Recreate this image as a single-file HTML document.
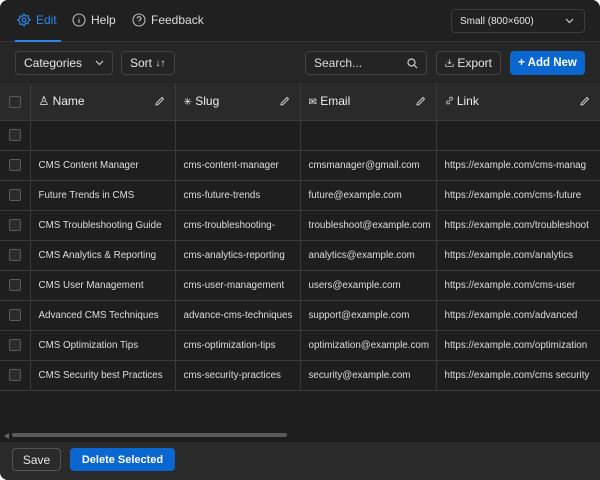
<!DOCTYPE html>
<html><head><style>
*{box-sizing:border-box;margin:0;padding:0}
html,body{width:600px;height:480px;background:#fff;overflow:hidden;font-family:"Liberation Sans",sans-serif}
#app{position:absolute;left:0;top:0;width:600px;height:480px;background:#1e1e1e;border-radius:8px 8px 0 8px;overflow:hidden;color:#e6e6e6}
.top{position:absolute;top:0;left:0;right:0;height:42px;background:#202020;border-bottom:1px solid #353535}
.tab{position:absolute;top:13px;font-size:12px;display:flex;align-items:center;gap:5px;color:#ddd}
.tb{position:absolute;top:42px;left:0;right:0;height:41px;background:#262626}
.btn{position:absolute;height:24px;border:1px solid #444;border-radius:4px;font-size:12px;display:flex;align-items:center;padding:0 8px;color:#e6e6e6;background:#242424;white-space:nowrap}
.blue{background:#0b67d0;border-color:#0b67d0;color:#fff}
table{position:absolute;top:83px;left:0;border-collapse:collapse;font-size:9.8px;table-layout:fixed;width:620px}
td,th{border:1px solid #3a3a3a;height:30px;padding:0 8px;white-space:nowrap;overflow:hidden;text-align:left;font-weight:normal;color:#ddd}
th{height:37px;background:#2a2a2a;font-size:12px;color:#eee;position:relative}
tr:first-child th{border-top:none}
td:first-child,th:first-child{border-left:none;padding:0;text-align:center}
.cb{display:inline-block;width:12px;height:12px;border:1px solid #5a5a5a;border-radius:2px;background:#2b2b2b;vertical-align:middle}
.pen{position:absolute;right:10px;top:13px}
.foot{position:absolute;left:0;right:0;top:442px;bottom:0;background:#2a2a2a}
</style></head><body><div id="app">
<div class="top">
 <div class="tab" style="left:17px;color:#2f86e8"><svg width="14" height="14" viewBox="0 0 14 14" fill="none" stroke="#2f86e8" stroke-width="1.2"><path d="M7 1l1.5 2 2.5-.3.3 2.5 2 1.5-2 1.5-.3 2.5-2.5-.3L7 13l-1.5-2-2.5.3-.3-2.5L.7 7l2-1.5.3-2.5 2.5.3z"/><circle cx="7" cy="7" r="2"/></svg>Edit</div>
 <div style="position:absolute;left:15px;top:40px;width:46px;height:2px;background:#2f86e8"></div>
 <div class="tab" style="left:72px"><svg width="14" height="14" viewBox="0 0 14 14" fill="none" stroke="#bbb" stroke-width="1.1"><circle cx="7" cy="7" r="6"/><path d="M7 6v4M7 4v.5"/></svg>Help</div>
 <div class="tab" style="left:132px"><svg width="14" height="14" viewBox="0 0 14 14" fill="none" stroke="#bbb" stroke-width="1.1"><circle cx="7" cy="7" r="6"/><path d="M5.3 5.5a1.8 1.8 0 1 1 2.2 1.7c-.4.2-.5.5-.5 1v.3M7 10v.4"/></svg>Feedback</div>
 <div class="btn" style="left:451px;top:9px;width:134px;height:24px;font-size:10px;background:#202020;border-color:#3c3c3c">Small (800×600)<svg style="position:absolute;right:10px" width="9" height="6" viewBox="0 0 9 6" fill="none" stroke="#ccc" stroke-width="1.2"><path d="M1 1l3.5 3.5L8 1"/></svg></div>
</div>
<div class="tb">
 <div class="btn" style="left:15px;top:9px;width:98px">Categories<svg style="position:absolute;right:8px" width="9" height="6" viewBox="0 0 9 6" fill="none" stroke="#ccc" stroke-width="1.2"><path d="M1 1l3.5 3.5L8 1"/></svg></div>
 <div class="btn" style="left:121px;top:9px;width:54px">Sort&nbsp;<span style="font-size:10px">↓↑</span></div>
 <div class="btn" style="left:305px;top:9px;width:122px;color:#ddd">Search...<svg style="position:absolute;right:8px" width="11" height="11" viewBox="0 0 11 11" fill="none" stroke="#ccc" stroke-width="1.2"><circle cx="4.5" cy="4.5" r="3.5"/><path d="M7 7l3 3"/></svg></div>
 <div class="btn" style="left:436px;top:9px;width:65px"><svg width="12" height="12" viewBox="0 0 12 12" fill="none" stroke="#ccc" stroke-width="1.1"><path d="M6 1v6M3.5 4.5L6 7l2.5-2.5M1 7v3.5h10V7"/></svg>&nbsp;Export</div>
 <div class="btn blue" style="left:510px;top:9px;width:75px;font-weight:bold;font-size:11.5px;justify-content:center;padding:0">+ Add New</div>
</div>
<table>
<colgroup><col style="width:30px"><col style="width:145px"><col style="width:125px"><col style="width:136px"><col style="width:184px"></colgroup>
<tr><th><span class="cb"></span></th><th>♙ Name<svg class="pen" width="10" height="10" viewBox="0 0 10 10" fill="none" stroke="#ccc"><path d="M1 9l.5-2L7 1.5 8.5 3 3 8.5z"/></svg></th><th><span style="font-size:10px">✳</span> Slug<svg class="pen" width="10" height="10" viewBox="0 0 10 10" fill="none" stroke="#ccc"><path d="M1 9l.5-2L7 1.5 8.5 3 3 8.5z"/></svg></th><th><span style="font-size:10px">✉</span> Email<svg class="pen" width="10" height="10" viewBox="0 0 10 10" fill="none" stroke="#ccc"><path d="M1 9l.5-2L7 1.5 8.5 3 3 8.5z"/></svg></th><th><svg width="9" height="9" viewBox="0 0 9 9" fill="none" stroke="#bbb"><path d="M3.5 5.5l2-2M4 2.5l1-1a1.4 1.4 0 0 1 2 2l-1 1M5 6.5l-1 1a1.4 1.4 0 0 1-2-2l1-1"/></svg> Link<svg class="pen" style="right:30px" width="10" height="10" viewBox="0 0 10 10" fill="none" stroke="#ccc"><path d="M1 9l.5-2L7 1.5 8.5 3 3 8.5z"/></svg></th></tr>
<tr><td><span class="cb"></span></td><td></td><td></td><td></td><td></td></tr>
<tr><td><span class="cb"></span></td><td>CMS Content Manager</td><td>cms-content-manager</td><td>cmsmanager@gmail.com</td><td>https://example.com/cms-manag</td></tr>
<tr><td><span class="cb"></span></td><td>Future Trends in CMS</td><td>cms-future-trends</td><td>future@example.com</td><td>https://example.com/cms-future</td></tr>
<tr><td><span class="cb"></span></td><td>CMS Troubleshooting Guide</td><td>cms-troubleshooting-</td><td>troubleshoot@example.com</td><td>https://example.com/troubleshoot</td></tr>
<tr><td><span class="cb"></span></td><td>CMS Analytics &amp; Reporting</td><td>cms-analytics-reporting</td><td>analytics@example.com</td><td>https://example.com/analytics</td></tr>
<tr><td><span class="cb"></span></td><td>CMS User Management</td><td>cms-user-management</td><td>users@example.com</td><td>https://example.com/cms-user</td></tr>
<tr><td><span class="cb"></span></td><td>Advanced CMS Techniques</td><td>advance-cms-techniques</td><td>support@example.com</td><td>https://example.com/advanced</td></tr>
<tr><td><span class="cb"></span></td><td>CMS Optimization Tips</td><td>cms-optimization-tips</td><td>optimization@example.com</td><td>https://example.com/optimization</td></tr>
<tr><td><span class="cb"></span></td><td>CMS Security best Practices</td><td>cms-security-practices</td><td>security@example.com</td><td>https://example.com/cms security</td></tr>
</table>
<div style="position:absolute;left:4px;top:433px;width:0;height:0;border-top:3px solid transparent;border-bottom:3px solid transparent;border-right:5px solid #666"></div>
<div style="position:absolute;left:12px;top:433px;width:275px;height:4px;border-radius:2px;background:#5a5a5a"></div>
<div class="foot">
 <div class="btn" style="left:12px;top:6px;width:49px;height:23px;background:#2a2a2a;border-color:#555;justify-content:center">Save</div>
 <div class="btn blue" style="left:70px;top:6px;width:105px;height:23px;justify-content:center;font-weight:bold;font-size:11px">Delete Selected</div>
</div>
</div></body></html>
